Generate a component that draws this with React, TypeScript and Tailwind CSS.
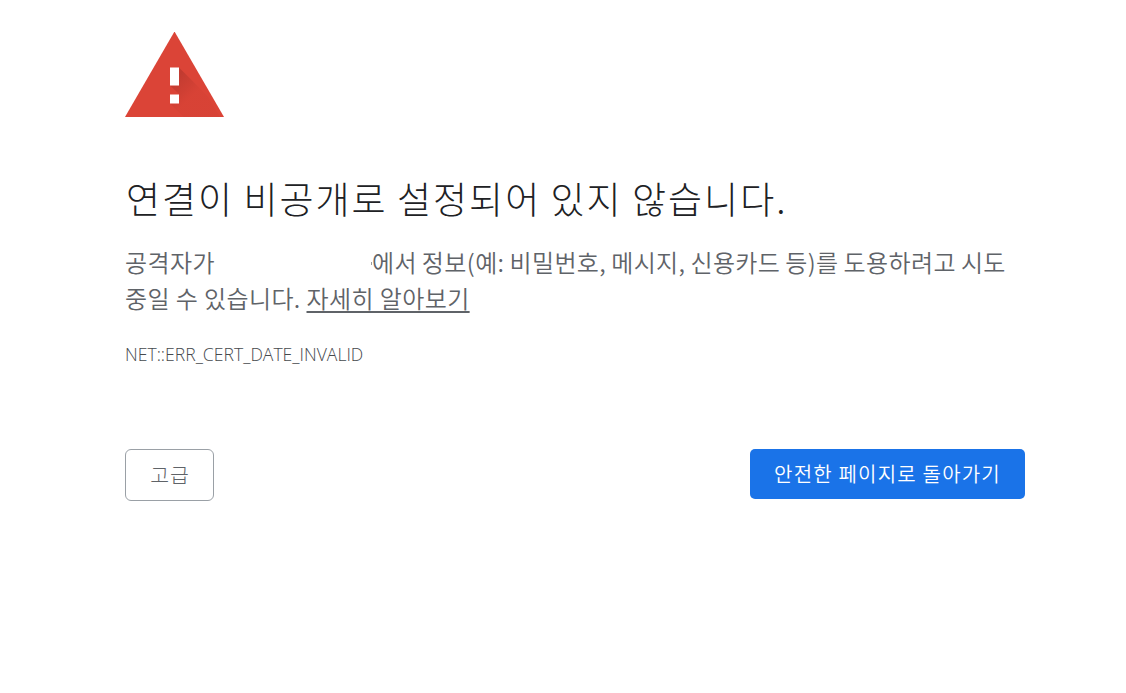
const WarningIcon = () => (
    <svg className="block h-[86px] w-[99px]" viewBox="0 0 99 86" fill="none">
        <defs>
            <linearGradient id="shade" x1="49" y1="48" x2="66" y2="65" gradientUnits="userSpaceOnUse">
                <stop stopColor="#a8322a" stopOpacity="0.5" />
                <stop offset="0.6" stopColor="#b8372d" stopOpacity="0.35" />
                <stop offset="1" stopColor="#c53a2f" stopOpacity="0.15" />
            </linearGradient>
        </defs>
        <path d="M49.5 -0.5 99 85H0Z" fill="#db4437" />
        <path d="M54 35.5 82.5 64 95 85H58.5L45 71.5H54V62L45 53.5H54Z" fill="url(#shade)" />
        <path d="M45 35.5h9v18h-9zM45 62.5h9v9h-9z" fill="#fff" />
    </svg>
);

const App = () => {
    return (
        <main className="min-h-screen bg-white pl-[125px] pt-8 font-['Noto_Sans_CJK_KR',sans-serif] text-[#5f6368]">
            <div className="w-[900px]">
                <WarningIcon />
                <h1 className="mt-[53px] pl-px whitespace-nowrap text-[37px] leading-[54px] font-light tracking-[2px] [word-spacing:-0.8px] text-[#202124]">
                    연결이 비공개로 설정되어 있지 않습니다.
                </h1>
                <p className="mt-[19px] whitespace-nowrap text-[24px] leading-9 font-[350] tracking-[0.4px]">
                    공격자가
                    <span className="inline-flex w-[157px] justify-end align-[7px]">
                        <span className="h-[3px] w-px bg-[#9a9da1]" />
                    </span>
                    <span className="[word-spacing:-0.8px]">
                        에서 정보(예: 비밀번호, 메시지, 신용카드 등)를 도용하려고 시도
                    </span>
                    <br />
                    중일 수 있습니다.{' '}
                    <a href="#" className="underline decoration-2 underline-offset-[3px]">
                        자세히 알아보기
                    </a>
                </p>
                <div className="mt-[26px] text-[17.6px] leading-6 font-['Open_Sans','Noto_Sans',sans-serif] font-[350] text-[#46494d]">
                    <span>NET::ERR_CERT_DATE_INVALID</span>
                </div>
                <div className="mt-[83px] flex items-start justify-between">
                    <button className="h-[52px] w-[89px] rounded-[6px] border border-[#9aa0a6] pb-0.5 pl-px text-[20.5px] font-light tracking-[0.8px]">
                        고급
                    </button>
                    <button className="h-[50px] w-[275px] rounded-[5px] bg-[#1a73e8] text-[20px] font-[350] tracking-[1.2px] whitespace-nowrap text-white">
                        안전한 페이지로 돌아가기
                    </button>
                </div>
            </div>
        </main>
    );
};

export default App;
